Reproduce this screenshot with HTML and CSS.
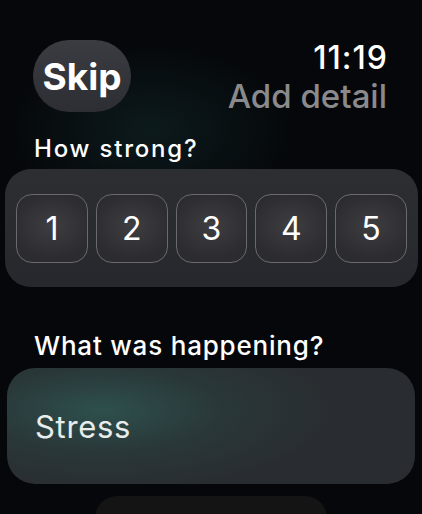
FILE: index.html
```html
<!DOCTYPE html>
<html>
<head>
<meta charset="utf-8">
<link rel="stylesheet" href="styles.css">
</head>
<body>
<div class="screen">
  <header class="top">
    <div class="skip">Skip</div>
    <div class="status">
      <div class="time">11:19</div>
      <div class="title">Add detail</div>
    </div>
  </header>
  <div class="label label-strong">How strong?</div>
  <div class="panel">
    <div class="num">1</div>
    <div class="num">2</div>
    <div class="num">3</div>
    <div class="num">4</div>
    <div class="num">5</div>
  </div>
  <div class="label label-what">What was happening?</div>
  <div class="choice">Stress</div>
  <div class="next"></div>
</div>
</body>
</html>
```
FILE: styles.css
```css
html, body {
  margin: 0;
  padding: 0;
  width: 422px;
  height: 514px;
  overflow: hidden;
  background: #05070a;
}
.screen {
  width: 422px;
  height: 514px;
  box-sizing: border-box;
  font-family: Inter, "Noto Sans", sans-serif;
  color: #fff;
  background:
    radial-gradient(ellipse 150px 90px at 150px 130px, rgba(30, 70, 70, 0.3), rgba(0,0,0,0) 100%),
    #05070a;
  display: flex;
  flex-direction: column;
}
.screen > * {
  flex-shrink: 0;
}
.top {
  display: flex;
  justify-content: space-between;
  align-items: flex-start;
  padding: 40px 35px 0 33px;
}
.skip {
  width: 98px;
  height: 72px;
  border-radius: 36px;
  background: linear-gradient(180deg, #3a3c41 0%, #2c2e33 100%);
  display: flex;
  align-items: center;
  justify-content: center;
  font-size: 37px;
  font-weight: 700;
}
.status {
  display: flex;
  flex-direction: column;
  align-items: flex-end;
}
.time {
  font-size: 32px;
  font-weight: 500;
  line-height: 36px;
  letter-spacing: 1px;
  margin-right: -1px;
}
.title {
  font-size: 33px;
  font-weight: 500;
  color: #8a8a8c;
  line-height: 40px;
}
.label {
  font-weight: 500;
  padding-left: 34px;
}
.label-strong {
  font-size: 24px;
  line-height: 28px;
  margin-top: 19px;
  letter-spacing: 1.8px;
}
.panel {
  margin: 6px 4px 0 5px;
  height: 118px;
  box-sizing: border-box;
  border-radius: 26px;
  background: linear-gradient(180deg, #2d2e32 0%, #26282d 100%);
  display: flex;
  align-items: center;
  gap: 8px;
  padding: 0 11px;
}
.num {
  flex: 1;
  height: 69px;
  box-sizing: border-box;
  border: 1.5px solid #6a6a6d;
  border-radius: 16px;
  background: radial-gradient(ellipse 60% 50% at 50% 45%, #3e3e41 0%, #2c2c30 100%);
  display: flex;
  align-items: center;
  justify-content: center;
  font-size: 32px;
  font-weight: 400;
}
.label-what {
  font-size: 26px;
  line-height: 30px;
  margin-top: 44px;
  letter-spacing: 0.8px;
}
.choice {
  margin: 7px 7px 0 7px;
  height: 116px;
  box-sizing: border-box;
  border-radius: 28px;
  background:
    radial-gradient(ellipse 240px 85px at 95px 42px, rgba(46, 84, 80, 0.9) 0%, rgba(42, 62, 62, 0.6) 50%, rgba(40, 44, 48, 0) 100%),
    #292c30;
  display: flex;
  align-items: center;
  padding-left: 28px;
  font-size: 31px;
  font-weight: 400;
  letter-spacing: 0.7px;
  color: #e8ecea;
}
.next {
  margin: 12px 0 0 95px;
  width: 232px;
  height: 40px;
  border-radius: 22px 22px 0 0;
  background: #141414;
}
```
